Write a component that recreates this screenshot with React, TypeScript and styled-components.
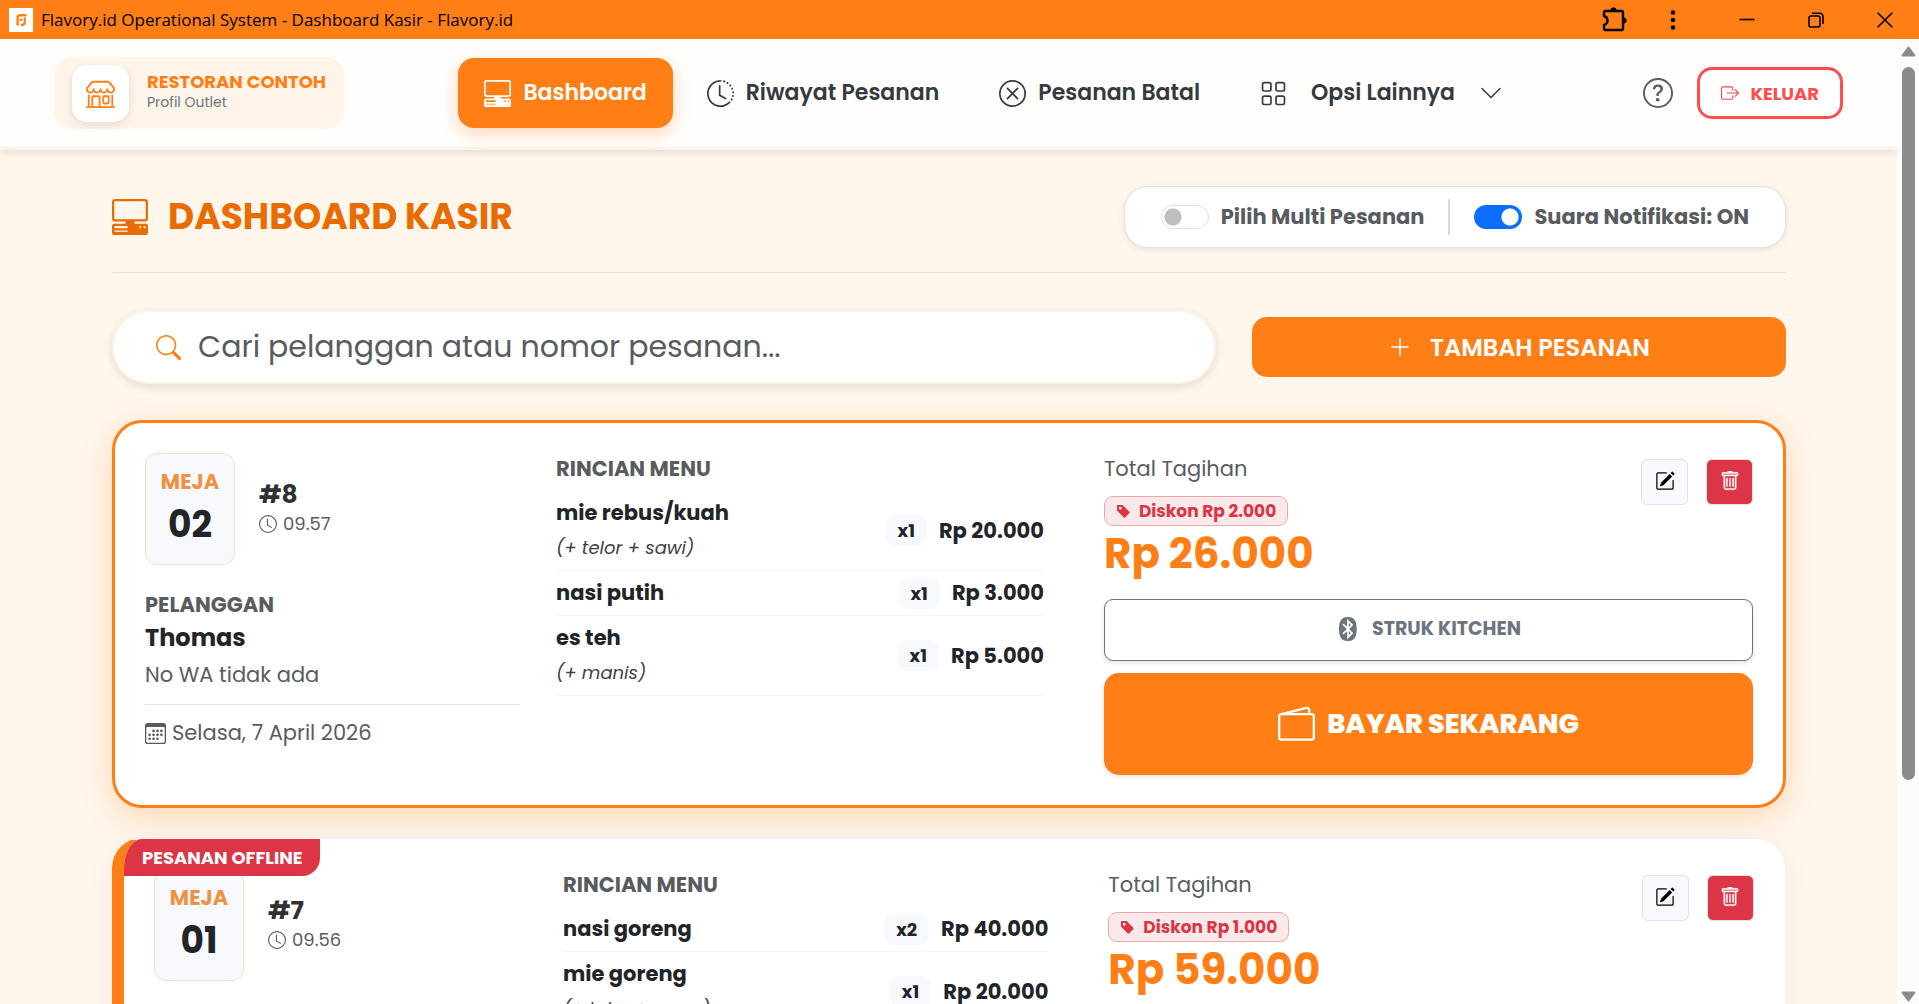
import React from 'react';
import styled, { createGlobalStyle, css } from 'styled-components';
import {
  BsBluetooth,
  BsBoxArrowRight,
  BsCalendar3,
  BsChevronDown,
  BsClock,
  BsClockHistory,
  BsGrid,
  BsPcDisplayHorizontal,
  BsPencilSquare,
  BsPlusLg,
  BsQuestionCircle,
  BsSearch,
  BsShop,
  BsTagFill,
  BsTrash,
  BsWallet2,
  BsXCircle,
} from 'react-icons/bs';

const color = {
  brand: '#ff7f16',
  brandDark: '#e86c00',
  page: '#fff6ec',
  cream: '#fff4ea',
  ink: '#212529',
  nav: '#343a40',
  muted: '#585c5f',
  grey: '#6c757d',
  line: '#dee2e6',
  soft: '#f8f9fc',
  danger: '#dc3545',
  exit: '#ff4d4d',
  blue: '#0d6efd',
};

const GlobalStyle = createGlobalStyle`
  *, *::before, *::after { box-sizing: border-box; }
  body {
    margin: 0;
    background: ${color.page};
    color: ${color.ink};
    font-family: Poppins, Inter, "Liberation Sans", sans-serif;
  }
  button, input { font: inherit; }
  button { cursor: pointer; }
  h1, h2, p, ul { margin: 0; padding: 0; }
  svg { flex: none; display: block; }
`;

const Shell = styled.div`
  display: flex;
  flex-direction: column;
  height: 100vh;
  overflow: hidden;
`;

/* Window frame */

const TitleBar = styled.div`
  flex: none;
  display: flex;
  align-items: center;
  height: 39px;
  padding-left: 9px;
  background: ${color.brand};
  color: #000;
`;

const AppTitle = styled.span`
  flex: 1;
  margin-left: 8px;
  font-family: "Segoe UI", "Open Sans", sans-serif;
  font-size: 17px;
  line-height: 24px;
  white-space: nowrap;
`;

const FrameButton = styled.button<{ $width: number; $gap?: number }>`
  display: flex;
  align-items: center;
  justify-content: center;
  width: ${(p) => p.$width}px;
  height: 39px;
  margin-left: ${(p) => p.$gap ?? 0}px;
  padding: 0;
  border: 0;
  background: none;
  color: inherit;
`;

const Viewport = styled.div`
  flex: 1;
  display: flex;
  min-height: 0;
`;

const Page = styled.div`
  flex: 1;
  min-width: 0;
  overflow: hidden;
`;

const ScrollBar = styled.div`
  flex: none;
  display: flex;
  flex-direction: column;
  align-items: center;
  gap: 10px;
  width: 22px;
  padding: 7px 0 2px;
  background: #fcfcfc;
`;

const Track = styled.div`
  flex: 1;
  width: 13px;
`;

const Thumb = styled.div`
  height: 78%;
  border-radius: 7px;
  background: #8b8b8b;
`;

/* Page header */

const Header = styled.header`
  position: relative;
  display: flex;
  align-items: center;
  justify-content: space-between;
  padding: 18px 54px;
  border-bottom: 3px solid #fff3e9;
  background: #fffefd;
  box-shadow: 0 2px 8px rgba(90, 50, 20, 0.14);
`;

const Brand = styled.a`
  display: flex;
  align-items: center;
  gap: 18px;
  height: 72px;
  padding: 0 18px;
  border-radius: 18px;
  background: ${color.cream};
  color: inherit;
  text-decoration: none;
`;

const BrandMark = styled.span`
  display: flex;
  align-items: center;
  justify-content: center;
  width: 57px;
  height: 57px;
  border-radius: 15px;
  background: #fff;
  color: ${color.brand};
  box-shadow: 0 3px 8px rgba(90, 50, 20, 0.14);
`;

const BrandText = styled.span`
  display: flex;
  flex-direction: column;
  padding-bottom: 2px;
  line-height: 20px;
`;

const BrandName = styled.strong`
  color: ${color.brand};
  font-size: 18px;
  font-weight: 700;
`;

const BrandNote = styled.small`
  color: ${color.grey};
  font-size: 14px;
`;

const Nav = styled.nav`
  display: flex;
  gap: 8px;
`;

const navItem = css`
  display: flex;
  align-items: center;
  gap: 12px;
  height: 70px;
  padding: 0 26px;
  border: 0;
  border-radius: 16px;
  background: none;
  color: ${color.nav};
  font-size: 22px;
  font-weight: 600;
  line-height: 32px;
  white-space: nowrap;
  text-decoration: none;
`;

const NavLink = styled.a<{ $active?: boolean }>`
  ${navItem}
  ${(p) =>
    p.$active &&
    css`
      background: ${color.brand};
      color: #fff;
      box-shadow: 0 6px 18px rgba(255, 127, 22, 0.3);
    `}
`;

const NavMenu = styled.button`
  ${navItem}
  gap: 24px;
`;

const HeaderActions = styled.div`
  display: flex;
  align-items: center;
  gap: 24px;
`;

const HelpButton = styled.button`
  padding: 0;
  border: 0;
  background: none;
  color: ${color.muted};
`;

const ExitButton = styled.button`
  display: flex;
  align-items: center;
  gap: 11px;
  height: 52px;
  padding: 0 21px;
  border: 3px solid ${color.exit};
  border-radius: 15px;
  background: #fff;
  color: ${color.exit};
  font-size: 18px;
  font-weight: 700;
`;

/* Dashboard */

const Main = styled.main`
  padding: 36px 111px 36px 112px;
`;

const Heading = styled.div`
  display: flex;
  align-items: center;
  justify-content: space-between;
  padding-bottom: 24px;
  border-bottom: 1px solid ${color.line};
`;

const PageTitle = styled.h1`
  display: flex;
  align-items: center;
  gap: 20px;
  color: ${color.brandDark};
  font-size: 36px;
  font-weight: 700;
  line-height: 44px;
`;

const Toggles = styled.div`
  display: flex;
  align-items: center;
  gap: 24px;
  height: 62px;
  padding: 0 36px;
  border: 1px solid ${color.line};
  border-radius: 24px;
  background: #fff;
  box-shadow: 0 2px 6px rgba(90, 50, 20, 0.1);
`;

const ToggleLabel = styled.label`
  display: flex;
  align-items: center;
  gap: 12px;
  color: ${color.muted};
  font-size: 21px;
  font-weight: 700;
  line-height: 32px;
`;

const Switch = styled.input`
  appearance: none;
  width: 48px;
  height: 24px;
  margin: 0;
  border-radius: 12px;
  background: radial-gradient(circle at 12px 12px, #bfbfbf 8px, transparent 9px) border-box #fff;
  box-shadow: inset 0 0 0 1px ${color.line};
  &:checked {
    background: radial-gradient(circle at 36px 12px, #fff 8px, transparent 9px) ${color.blue};
    box-shadow: none;
  }
`;

const ToggleDivider = styled.span`
  width: 2px;
  height: 36px;
  background: #d9dadb;
`;

const Columns = styled.div<{ $template: string }>`
  display: grid;
  grid-template-columns: ${(p) => p.$template};
  margin: 0 -18px;
  > * {
    min-width: 0;
    margin: 0 18px;
  }
`;

const Tools = styled(Columns)`
  align-items: center;
  padding: 37px 0 36px;
`;

const SearchBox = styled.label`
  display: flex;
  align-items: center;
  gap: 17px;
  height: 74px;
  padding: 0 42px;
  border: 2px solid #fff3e8;
  border-radius: 37px;
  background: #fff;
  color: ${color.brand};
  box-shadow: 0 3px 8px rgba(90, 50, 20, 0.14);
`;

const SearchInput = styled.input`
  flex: 1;
  min-width: 0;
  padding: 0;
  border: 0;
  outline: 0;
  background: none;
  color: ${color.ink};
  font-size: 30px;
  line-height: 44px;
  &::placeholder {
    color: ${color.muted};
    opacity: 1;
  }
`;

const AddButton = styled.button`
  display: flex;
  align-items: center;
  justify-content: center;
  gap: 18px;
  height: 60px;
  padding: 0;
  border: 0;
  border-radius: 15px;
  background: ${color.brand};
  color: #fff;
  font-size: 24px;
  font-weight: 600;
`;

/* Order cards */

const Orders = styled.div`
  display: grid;
  gap: 30px;
`;

const Card = styled.article<{ $offline?: boolean }>`
  position: relative;
  padding: 30px;
  border: 3px solid ${color.brand};
  border-radius: 30px;
  background: #fff;
  box-shadow: 0 8px 30px rgba(255, 127, 22, 0.26);
  ${(p) =>
    p.$offline &&
    css`
      overflow: hidden;
      padding: 30px 31px 30px 30px;
      border-width: 1px 1px 1px 12px;
      border-color: #f0f1f3 #f0f1f3 #f0f1f3 ${color.brand};
      box-shadow: 0 8px 30px rgba(90, 50, 20, 0.06);
    `}
`;

const Ribbon = styled.strong`
  position: absolute;
  top: 0;
  left: 0;
  z-index: 1;
  padding: 0 18px;
  border-bottom-right-radius: 18px;
  background: ${color.danger};
  color: #fff;
  font-size: 18px;
  font-weight: 700;
  line-height: 37px;
`;

const TableInfo = styled.div`
  display: flex;
  align-items: center;
  gap: 24px;
`;

const TableBox = styled.div`
  display: flex;
  flex-direction: column;
  align-items: center;
  width: 90px;
  height: 112px;
  padding-top: 12px;
  border: 1px solid #fadcc4;
  border-radius: 12px;
  background: ${color.soft};
`;

const TableLabel = styled.span`
  color: #ef9140;
  font-size: 21px;
  font-weight: 700;
  line-height: 32px;
`;

const TableNumber = styled.strong`
  font-size: 36px;
  font-weight: 700;
  line-height: 54px;
`;

const OrderNumber = styled.h2`
  color: #2f3133;
  font-size: 25px;
  font-weight: 700;
  line-height: 30px;
`;

const OrderTime = styled.p`
  display: flex;
  align-items: center;
  gap: 6px;
  color: ${color.muted};
  font-size: 18px;
  line-height: 28px;
`;

const SectionLabel = styled.h2`
  color: ${color.muted};
  font-size: 21px;
  font-weight: 700;
  line-height: 32px;
`;

const Customer = styled.div`
  margin-top: 24px;
  padding-bottom: 13px;
  border-bottom: 1px solid ${color.line};
`;

const CustomerName = styled.p`
  font-size: 24px;
  font-weight: 700;
  line-height: 34px;
`;

const CustomerPhone = styled.p`
  margin-top: 4px;
  color: ${color.muted};
  font-size: 21px;
  line-height: 32px;
`;

const OrderDate = styled.p`
  display: flex;
  align-items: center;
  gap: 6px;
  margin-top: 12px;
  color: ${color.muted};
  font-size: 21px;
  line-height: 32px;
`;

const Menu = styled.div`
  padding-right: 24px;
`;

const MenuList = styled.ul`
  margin-top: 6px;
  list-style: none;
`;

const MenuRow = styled.li`
  display: flex;
  align-items: center;
  gap: 12px;
  padding: 5px 0;
  border-bottom: 1px solid #f5f6f7;
`;

const MenuText = styled.div`
  flex: 1;
`;

const MenuName = styled.p`
  font-size: 21px;
  font-weight: 700;
  line-height: 34px;
`;

const MenuNote = styled.p`
  color: #3d4144;
  font-size: 18px;
  font-style: italic;
  line-height: 35px;
`;

const Quantity = styled.span`
  padding: 0 12px;
  border-radius: 9px;
  background: ${color.soft};
  font-size: 18px;
  font-weight: 700;
  line-height: 31px;
`;

const Price = styled.span`
  font-size: 21px;
  font-weight: 700;
  line-height: 32px;
`;

const BillTop = styled.div`
  display: flex;
  align-items: flex-start;
  justify-content: space-between;
`;

const BillLabel = styled.p`
  color: ${color.muted};
  font-size: 21px;
  line-height: 32px;
`;

const Discount = styled.p`
  display: flex;
  align-items: center;
  gap: 8px;
  width: max-content;
  height: 30px;
  margin-top: 11px;
  padding: 0 11px;
  border: 1px solid #f1a5ad;
  border-radius: 9px;
  background: #fae9eb;
  color: ${color.danger};
  font-size: 17px;
  font-weight: 700;
`;

const Amount = styled.p`
  color: ${color.brand};
  font-size: 42px;
  font-weight: 700;
  line-height: 56px;
`;

const IconButtons = styled.div`
  display: flex;
  gap: 18px;
  padding-top: 6px;
`;

const IconButton = styled.button<{ $danger?: boolean }>`
  display: flex;
  align-items: center;
  justify-content: center;
  width: 47px;
  height: 46px;
  padding: 0 0 3px;
  border: 1px solid ${color.line};
  border-radius: 6px;
  background: ${(p) => (p.$danger ? color.danger : color.soft)};
  color: ${(p) => (p.$danger ? '#fff' : '#000')};
`;

const ActionButton = styled.button<{ $primary?: boolean }>`
  display: flex;
  align-items: center;
  justify-content: center;
  gap: 12px;
  width: 100%;
  height: 62px;
  margin-top: 17px;
  padding: 0 0 3px;
  border: 1px solid ${color.grey};
  border-radius: 9px;
  background: #fff;
  color: ${color.grey};
  font-size: 19px;
  font-weight: 700;
  box-shadow: 0 2px 5px rgba(0, 0, 0, 0.1);
  ${(p) =>
    p.$primary &&
    css`
      height: 102px;
      margin-top: 12px;
      padding: 0;
      border: 0;
      border-radius: 15px;
      background: ${color.brand};
      color: #fff;
      font-size: 27px;
      font-weight: 800;
    `}
`;

const AppMark = () => (
  <svg width="24" height="24" viewBox="0 0 24 24" aria-hidden="true">
    <rect width="24" height="24" fill="#fff" />
    <path d="M17.500 7.200H11Q8.600 7.200 8.600 9.500V17.500" fill="none" stroke={color.brand} strokeWidth="2.400" />
    <path d="M10.500 11.800H13.500M15.800 9.500V14Q15.800 17.200 12 17.200" fill="none" stroke={color.brand} strokeWidth="2.200" />
  </svg>
);

const PuzzleIcon = () => (
  <svg width="28" height="28" viewBox="0 0 28 28" aria-hidden="true">
    <path
      d="M3 6.500Q3 5 4.500 5H20.500Q22 5 22 6.500V22.500Q22 24 20.500 24H4.500Q3 24 3 22.500V19Q6.500 18 6.500 14.500T3 10Z"
      fill="none"
      stroke="currentColor"
      strokeWidth="2.400"
      strokeLinejoin="round"
    />
    <path d="M9.800 4.500A2.700 2.700 0 0 1 15.200 4.500ZM22.500 11.800A2.700 2.700 0 0 1 22.500 17.200Z" fill="currentColor" stroke="currentColor" />
  </svg>
);

const DotsIcon = () => (
  <svg width="6" height="22" viewBox="0 0 6 22" fill="currentColor" aria-hidden="true">
    <circle cx="3" cy="3.500" r="2.300" />
    <circle cx="3" cy="11" r="2.300" />
    <circle cx="3" cy="18.500" r="2.300" />
  </svg>
);

const MinimiseIcon = () => (
  <svg width="16" height="16" viewBox="0 0 16 16" aria-hidden="true">
    <path d="M0.500 7.500H15.500" stroke="currentColor" strokeWidth="1.600" />
  </svg>
);

const RestoreIcon = () => (
  <svg width="16" height="16" viewBox="0 0 16 16" fill="none" stroke="currentColor" strokeWidth="1.600" aria-hidden="true">
    <rect x="1" y="4" width="11" height="11" rx="2" />
    <path d="M4 1.200H11.500Q15 1.200 15 4.700V12" />
  </svg>
);

const CloseIcon = () => (
  <svg width="16" height="16" viewBox="0 0 16 16" aria-hidden="true">
    <path d="M0.700 0.700L15.300 15.300M15.300 0.700L0.700 15.300" stroke="currentColor" strokeWidth="1.600" />
  </svg>
);

const ArrowIcon = ({ down }: { down?: boolean }) => (
  <svg width="15" height="11" viewBox="0 0 15 11" aria-hidden="true">
    <path
      d={down ? 'M1.500 1.500H13.500L7.500 9.500Z' : 'M1.500 9.500H13.500L7.500 1.500Z'}
      fill="#8b8b8b"
      stroke="#8b8b8b"
      strokeWidth="2"
      strokeLinejoin="round"
    />
  </svg>
);

type Item = { name: string; note?: string; qty: number; price: string };

type Order = {
  table: string;
  number: string;
  time: string;
  offline?: boolean;
  customer?: { name: string; phone: string; date: string };
  items: Item[];
  discount: string;
  total: string;
  payable?: boolean;
};

const orders: Order[] = [
  {
    table: '02',
    number: '#8',
    time: '09.57',
    customer: { name: 'Thomas', phone: 'No WA tidak ada', date: 'Selasa, 7 April 2026' },
    items: [
      { name: 'mie rebus/kuah', note: '(+ telor + sawi)', qty: 1, price: 'Rp 20.000' },
      { name: 'nasi putih', qty: 1, price: 'Rp 3.000' },
      { name: 'es teh', note: '(+ manis)', qty: 1, price: 'Rp 5.000' },
    ],
    discount: 'Diskon Rp 2.000',
    total: 'Rp 26.000',
    payable: true,
  },
  {
    table: '01',
    number: '#7',
    time: '09.56',
    offline: true,
    items: [
      { name: 'nasi goreng', qty: 2, price: 'Rp 40.000' },
      { name: 'mie goreng', note: '(+ telor + sayur)', qty: 1, price: 'Rp 20.000' },
    ],
    discount: 'Diskon Rp 1.000',
    total: 'Rp 59.000',
  },
];

const OrderCard = ({ order }: { order: Order }) => (
  <Card $offline={order.offline}>
    {order.offline && <Ribbon>PESANAN OFFLINE</Ribbon>}
    <Columns $template="3fr 4fr 5fr">
      <section>
        <TableInfo>
          <TableBox>
            <TableLabel>MEJA</TableLabel>
            <TableNumber>{order.table}</TableNumber>
          </TableBox>
          <div>
            <OrderNumber>{order.number}</OrderNumber>
            <OrderTime>
              <BsClock size={18} />
              {order.time}
            </OrderTime>
          </div>
        </TableInfo>
        {order.customer && (
          <>
            <Customer>
              <SectionLabel>PELANGGAN</SectionLabel>
              <CustomerName>{order.customer.name}</CustomerName>
              <CustomerPhone>{order.customer.phone}</CustomerPhone>
            </Customer>
            <OrderDate>
              <BsCalendar3 size={21} />
              {order.customer.date}
            </OrderDate>
          </>
        )}
      </section>
      <Menu>
        <SectionLabel>RINCIAN MENU</SectionLabel>
        <MenuList>
          {order.items.map((item) => (
            <MenuRow key={item.name}>
              <MenuText>
                <MenuName>{item.name}</MenuName>
                {item.note && <MenuNote>{item.note}</MenuNote>}
              </MenuText>
              <Quantity>x{item.qty}</Quantity>
              <Price>{item.price}</Price>
            </MenuRow>
          ))}
        </MenuList>
      </Menu>
      <section>
        <BillTop>
          <div>
            <BillLabel>Total Tagihan</BillLabel>
            <Discount>
              <BsTagFill size={15} />
              {order.discount}
            </Discount>
            <Amount>{order.total}</Amount>
          </div>
          <IconButtons>
            <IconButton type="button" aria-label="Ubah">
              <BsPencilSquare size={20} />
            </IconButton>
            <IconButton type="button" aria-label="Hapus" $danger>
              <BsTrash size={20} strokeWidth={0.3} />
            </IconButton>
          </IconButtons>
        </BillTop>
        {order.payable && (
          <>
            <ActionButton type="button">
              <BsBluetooth size={24} />
              STRUK KITCHEN
            </ActionButton>
            <ActionButton type="button" $primary>
              <BsWallet2 size={37} />
              BAYAR SEKARANG
            </ActionButton>
          </>
        )}
      </section>
    </Columns>
  </Card>
);

export default function App() {
  return (
    <Shell>
      <GlobalStyle />
      <TitleBar>
        <AppMark />
        <AppTitle>Flavory.id Operational System - Dashboard Kasir - Flavory.id</AppTitle>
        <FrameButton type="button" aria-label="Ekstensi" $width={58}>
          <PuzzleIcon />
        </FrameButton>
        <FrameButton type="button" aria-label="Menu" $width={58}>
          <DotsIcon />
        </FrameButton>
        <FrameButton type="button" aria-label="Minimalkan" $width={69} $gap={10}>
          <MinimiseIcon />
        </FrameButton>
        <FrameButton type="button" aria-label="Pulihkan" $width={69}>
          <RestoreIcon />
        </FrameButton>
        <FrameButton type="button" aria-label="Tutup" $width={69}>
          <CloseIcon />
        </FrameButton>
      </TitleBar>
      <Viewport>
        <Page>
          <Header>
            <Brand href="#profil">
              <BrandMark>
                <BsShop size={29} />
              </BrandMark>
              <BrandText>
                <BrandName>RESTORAN CONTOH</BrandName>
                <BrandNote>Profil Outlet</BrandNote>
              </BrandText>
            </Brand>
            <Nav>
              <NavLink href="#dashboard" $active>
                <BsPcDisplayHorizontal size={27} />
                Bashboard
              </NavLink>
              <NavLink href="#riwayat">
                <BsClockHistory size={27} />
                Riwayat Pesanan
              </NavLink>
              <NavLink href="#batal">
                <BsXCircle size={27} />
                Pesanan Batal
              </NavLink>
              <NavMenu type="button">
                <BsGrid size={27} />
                Opsi Lainnya
                <BsChevronDown size={24} />
              </NavMenu>
            </Nav>
            <HeaderActions>
              <HelpButton type="button" aria-label="Bantuan">
                <BsQuestionCircle size={30} />
              </HelpButton>
              <ExitButton type="button">
                <BsBoxArrowRight size={18} />
                KELUAR
              </ExitButton>
            </HeaderActions>
          </Header>
          <Main>
            <Heading>
              <PageTitle>
                <BsPcDisplayHorizontal size={36} />
                DASHBOARD KASIR
              </PageTitle>
              <Toggles>
                <ToggleLabel>
                  <Switch type="checkbox" role="switch" />
                  Pilih Multi Pesanan
                </ToggleLabel>
                <ToggleDivider />
                <ToggleLabel>
                  <Switch type="checkbox" role="switch" defaultChecked />
                  Suara Notifikasi: ON
                </ToggleLabel>
              </Toggles>
            </Heading>
            <Tools $template="2fr 1fr">
              <SearchBox>
                <BsSearch size={25} />
                <SearchInput type="text" aria-label="Cari pesanan" placeholder="Cari pelanggan atau nomor pesanan..." />
              </SearchBox>
              <AddButton type="button">
                <BsPlusLg size={24} />
                TAMBAH PESANAN
              </AddButton>
            </Tools>
            <Orders>
              {orders.map((order) => (
                <OrderCard key={order.number} order={order} />
              ))}
            </Orders>
          </Main>
        </Page>
        <ScrollBar aria-hidden="true">
          <ArrowIcon />
          <Track>
            <Thumb />
          </Track>
          <ArrowIcon down />
        </ScrollBar>
      </Viewport>
    </Shell>
  );
}
